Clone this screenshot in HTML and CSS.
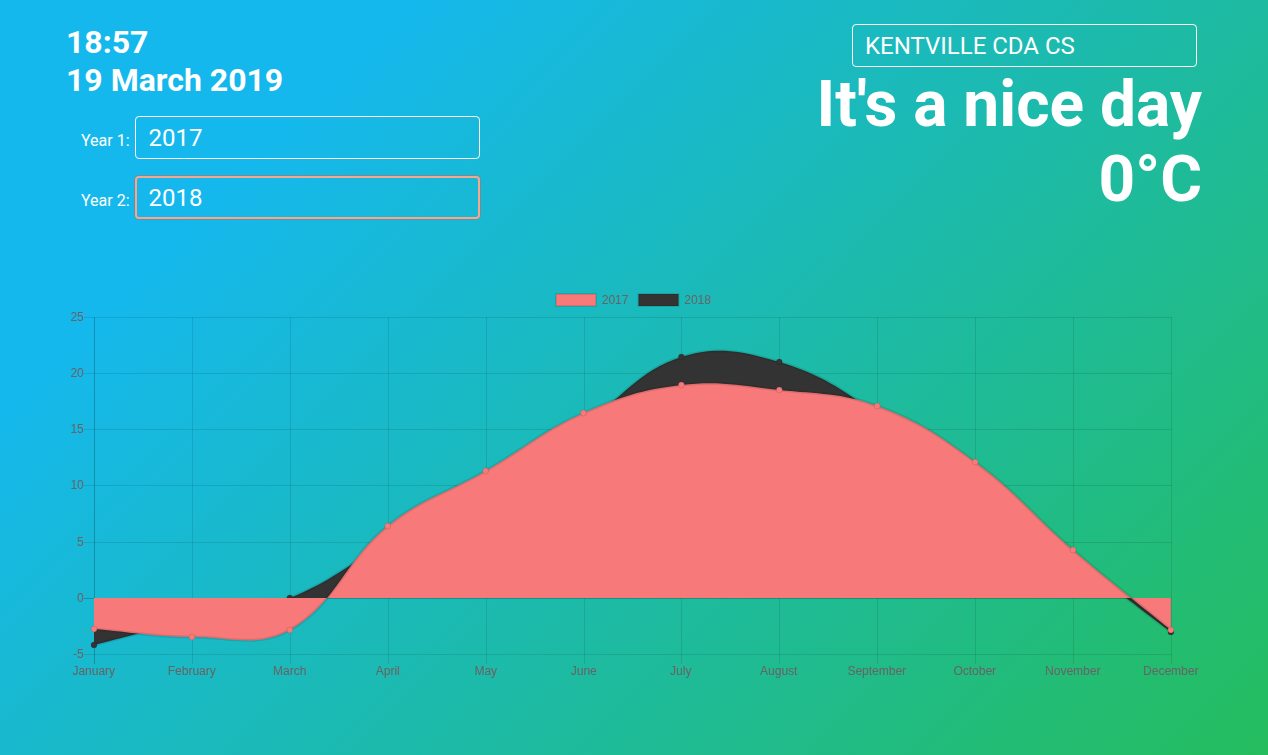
FILE: index.html
```html
<!DOCTYPE html>
<html lang="en">
<head>
<meta charset="utf-8">
<title>Weather</title>
<link rel="stylesheet" href="styles.css">
</head>
<body>
<div class="page">
  <div class="top">
    <div class="left">
      <div class="clock">18:57</div>
      <div class="clock">19 March 2019</div>
      <div class="years">
        <div class="year-row">
          <label class="year-label" for="y1">Year 1:</label>
          <input id="y1" class="field year-field" type="text" value="2017">
        </div>
        <div class="year-row">
          <label class="year-label" for="y2">Year 2:</label>
          <input id="y2" class="field year-field field-active" type="text" value="2018">
        </div>
      </div>
    </div>
    <div class="right">
      <input class="field station" type="text" value="KENTVILLE CDA CS">
      <div class="headline">It's a nice day</div>
      <div class="headline">0°C</div>
    </div>
  </div>

  <svg class="chart" width="1136" height="406" viewBox="66 284 1136 406" xmlns="http://www.w3.org/2000/svg">
    <!-- legend -->
    <rect x="556" y="294" width="40" height="12" fill="#f87979" stroke="rgba(0,0,0,0.1)" stroke-width="2"/>
    <text class="tick" x="602" y="304">2017</text>
    <rect x="638.5" y="294" width="40" height="12" fill="#333" stroke="rgba(0,0,0,0.1)" stroke-width="2"/>
    <text class="tick" x="684.5" y="304">2018</text>

    <!-- grid -->
    <g class="grid">
      <line x1="84" y1="317.5" x2="1171.5" y2="317.5"/>
      <line x1="84" y1="373.5" x2="1171.5" y2="373.5"/>
      <line x1="84" y1="429.5" x2="1171.5" y2="429.5"/>
      <line x1="84" y1="485.5" x2="1171.5" y2="485.5"/>
      <line x1="84" y1="542.5" x2="1171.5" y2="542.5"/>
      <line x1="84" y1="654.5" x2="1171.5" y2="654.5"/>
      <line x1="192.5" y1="317" x2="192.5" y2="664"/>
      <line x1="290.5" y1="317" x2="290.5" y2="664"/>
      <line x1="388.5" y1="317" x2="388.5" y2="664"/>
      <line x1="486.5" y1="317" x2="486.5" y2="664"/>
      <line x1="584.5" y1="317" x2="584.5" y2="664"/>
      <line x1="681.5" y1="317" x2="681.5" y2="664"/>
      <line x1="779.5" y1="317" x2="779.5" y2="664"/>
      <line x1="877.5" y1="317" x2="877.5" y2="664"/>
      <line x1="975.5" y1="317" x2="975.5" y2="664"/>
      <line x1="1073.5" y1="317" x2="1073.5" y2="664"/>
      <line x1="1171.5" y1="317" x2="1171.5" y2="664"/>
    </g>
    <g class="zero">
      <line x1="84" y1="598.5" x2="1171.5" y2="598.5"/>
      <line x1="94.5" y1="317" x2="94.5" y2="664"/>
    </g>

    <!-- 2018 dataset -->
    <path class="fill-dark" d="M94,645 C133.2,635 152.6,629.4 191.9,620 C230.9,610.6 252.9,612.7 289.8,598 C331.3,581.5 348.5,564.4 387.7,542 C426.9,519.6 447,509.3 485.6,486 C525.3,462.1 544.8,449.5 583.5,424 C623.1,397.9 638.5,370.6 681.4,357 C716.8,345.8 742.5,351.3 779.3,362 C820.9,374.1 840.9,389 877.2,414 C919.2,443 933.9,466.5 975.1,497 C1012.3,524.5 1034.9,532.7 1073,559 C1113.2,586.7 1131.7,602.8 1170.9,632 L1170.9,598 L94,598 Z"/>
    <path class="edge" d="M94,645 C133.2,635 152.6,629.4 191.9,620 C230.9,610.6 252.9,612.7 289.8,598 C331.3,581.5 348.5,564.4 387.7,542 C426.9,519.6 447,509.3 485.6,486 C525.3,462.1 544.8,449.5 583.5,424 C623.1,397.9 638.5,370.6 681.4,357 C716.8,345.8 742.5,351.3 779.3,362 C820.9,374.1 840.9,389 877.2,414 C919.2,443 933.9,466.5 975.1,497 C1012.3,524.5 1034.9,532.7 1073,559 C1113.2,586.7 1131.7,602.8 1170.9,632"/>
    <g class="pt-dark">
      <circle cx="94" cy="645" r="3"/>
      <circle cx="191.9" cy="620" r="3"/>
      <circle cx="289.8" cy="598" r="3"/>
      <circle cx="387.7" cy="542" r="3"/>
      <circle cx="485.6" cy="486" r="3"/>
      <circle cx="583.5" cy="424" r="3"/>
      <circle cx="681.4" cy="357" r="3"/>
      <circle cx="779.3" cy="362" r="3"/>
      <circle cx="877.2" cy="414" r="3"/>
      <circle cx="975.1" cy="497" r="3"/>
      <circle cx="1073" cy="559" r="3"/>
      <circle cx="1170.9" cy="632" r="3"/>
    </g>

    <!-- 2017 dataset -->
    <path class="fill-pink" d="M94,629 C133.2,632.2 152.7,636.8 191.9,637 C231,637.2 257.9,648.1 289.8,630 C336.2,603.7 343.9,561.6 387.7,526 C422.2,498 446.7,493.5 485.6,471 C525,448.3 542.2,431.2 583.5,413 C620.5,396.8 641.5,389.7 681.4,385 C719.8,380.5 740.4,385.8 779.3,390 C818.7,394.2 840.5,392.5 877.2,406 C918.9,421.3 939,435.4 975.1,462 C1017.3,493 1033.1,515.7 1073,550 C1111.4,582.9 1131.7,598 1170.9,630 L1170.9,598 L94,598 Z"/>
    <path class="edge" d="M94,629 C133.2,632.2 152.7,636.8 191.9,637 C231,637.2 257.9,648.1 289.8,630 C336.2,603.7 343.9,561.6 387.7,526 C422.2,498 446.7,493.5 485.6,471 C525,448.3 542.2,431.2 583.5,413 C620.5,396.8 641.5,389.7 681.4,385 C719.8,380.5 740.4,385.8 779.3,390 C818.7,394.2 840.5,392.5 877.2,406 C918.9,421.3 939,435.4 975.1,462 C1017.3,493 1033.1,515.7 1073,550 C1111.4,582.9 1131.7,598 1170.9,630"/>
    <g class="pt-pink">
      <circle cx="94" cy="629" r="3"/>
      <circle cx="191.9" cy="637" r="3"/>
      <circle cx="289.8" cy="630" r="3"/>
      <circle cx="387.7" cy="526" r="3"/>
      <circle cx="485.6" cy="471" r="3"/>
      <circle cx="583.5" cy="413" r="3"/>
      <circle cx="681.4" cy="385" r="3"/>
      <circle cx="779.3" cy="390" r="3"/>
      <circle cx="877.2" cy="406" r="3"/>
      <circle cx="975.1" cy="462" r="3"/>
      <circle cx="1073" cy="550" r="3"/>
      <circle cx="1170.9" cy="630" r="3"/>
    </g>

    <!-- y ticks -->
    <g class="tick ytick">
      <text x="84" y="321">25</text>
      <text x="84" y="377">20</text>
      <text x="84" y="433">15</text>
      <text x="84" y="489">10</text>
      <text x="84" y="546">5</text>
      <text x="84" y="602">0</text>
      <text x="84" y="658">-5</text>
    </g>
    <!-- x ticks -->
    <g class="tick xtick">
      <text x="94" y="675">January</text>
      <text x="192" y="675">February</text>
      <text x="290" y="675">March</text>
      <text x="388" y="675">April</text>
      <text x="486" y="675">May</text>
      <text x="584" y="675">June</text>
      <text x="681" y="675">July</text>
      <text x="779" y="675">August</text>
      <text x="877" y="675">September</text>
      <text x="975" y="675">October</text>
      <text x="1073" y="675">November</text>
      <text x="1171" y="675">December</text>
    </g>
  </svg>
</div>
</body>
</html>
```
FILE: styles.css
```css
html, body {
  margin: 0;
  padding: 0;
}

body {
  font-family: Roboto, "Noto Sans", sans-serif;
  color: #fff;
  overflow: hidden;
}

.page {
  width: 1268px;
  height: 755px;
  box-sizing: border-box;
  padding: 24px 66px 0;
  background: linear-gradient(135deg, #15b8ed 20%, #25bd5d 100%);
}

.top {
  display: flex;
  justify-content: space-between;
  align-items: flex-start;
}

.clock {
  font-size: 32px;
  font-weight: 700;
  line-height: 37.5px;
}

.years {
  margin-top: 17px;
  padding-left: 15px;
  display: flex;
  flex-direction: column;
  gap: 17px;
}

.year-row {
  display: flex;
  align-items: baseline;
}

.year-label {
  font-size: 16px;
  margin-right: 5px;
}

.field {
  width: 345px;
  height: 43px;
  box-sizing: border-box;
  margin: 0;
  padding: 0 12px;
  border: 1px solid #fff;
  border-radius: 4px;
  background: transparent;
  color: #fff;
  font-family: Roboto, "Noto Sans", sans-serif;
  font-size: 24px;
  outline: none;
}

.year-field {
  padding: 0 13px;
}

.field-active {
  border: 2px solid #f4a88e;
  padding: 0 12px;
  box-shadow: 0 0 0 1px rgba(120, 135, 140, 0.75);
}

.right {
  display: flex;
  flex-direction: column;
  align-items: flex-end;
}

.station {
  margin-right: 5px;
}

.headline {
  font-size: 64px;
  font-weight: 700;
  line-height: 75px;
  text-align: right;
}

.chart {
  display: block;
  margin-top: 65px;
}

.grid line {
  stroke: rgba(0, 0, 0, 0.1);
  stroke-width: 1;
}

.zero line {
  stroke: rgba(0, 0, 0, 0.22);
  stroke-width: 1;
}

.fill-dark {
  fill: #333;
}

.fill-pink {
  fill: #f87979;
}

.edge {
  fill: none;
  stroke: rgba(0, 0, 0, 0.1);
  stroke-width: 3;
}

.pt-dark circle {
  fill: #333;
  stroke: rgba(0, 0, 0, 0.1);
  stroke-width: 1;
}

.pt-pink circle {
  fill: #f87979;
  stroke: rgba(0, 0, 0, 0.1);
  stroke-width: 1;
}

.tick {
  font-family: "Liberation Sans", Arial, sans-serif;
  font-size: 12px;
  fill: #666;
}

.ytick text {
  text-anchor: end;
}

.xtick text {
  text-anchor: middle;
}
```
